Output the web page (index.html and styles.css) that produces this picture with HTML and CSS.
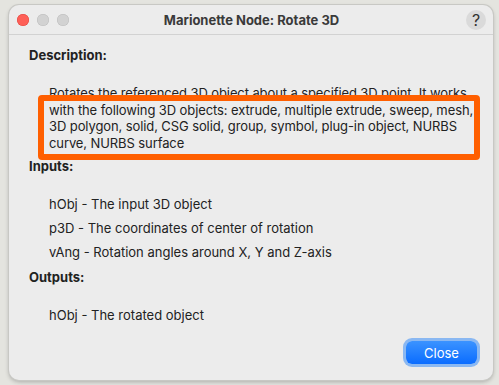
FILE: index.html
```html
<!DOCTYPE html>
<html>
<head>
    <title>Marionette Node: Rotate 3D</title>
    <meta name="viewport" content="width=device-width, initial-scale=1">
    <link rel="stylesheet" href="styles.css">
</head>
<body>
    <div class="window">
        <div class="titlebar">
            <div class="lights">
                <span class="light red"></span>
                <span class="light"></span>
                <span class="light"></span>
            </div>
            <div class="title">Marionette Node: Rotate 3D</div>
            <div class="help">?</div>
        </div>
        <div class="content">
            <h2 class="label">Description:</h2>
            <p class="desc">Rotates the referenced 3D object about a specified 3D point. It works with the following 3D objects: extrude, multiple extrude, sweep, mesh, 3D polygon, solid, CSG solid, group, symbol, plug-in object, NURBS curve, NURBS surface</p>
            <div class="highlight"></div>

            <h2 class="label">Inputs:</h2>
            <ul class="params">
                <li>hObj - The input 3D object</li>
                <li>p3D - The coordinates of center of rotation</li>
                <li>vAng - Rotation angles around X, Y and Z-axis</li>
            </ul>

            <h2 class="label">Outputs:</h2>
            <ul class="params outputs">
                <li>hObj - The rotated object</li>
            </ul>

            <div class="actions">
                <button class="close">Close</button>
            </div>
        </div>
    </div>
</body>
</html>
```

FILE: styles.css
```css
body {
    margin: 0;
    padding: 5px 6px 5px 9px;
    background-color: #e4e4df;
    font-family: Inter, "Liberation Sans", Arial, sans-serif;
    font-size: 13px;
    color: #222;
}
.window {
    width: 484px;
    height: 375px;
    background-color: #ececec;
    border-radius: 10px;
    box-shadow: 0 0 0 1px #c8c8c4, 0 2px 4px rgba(0, 0, 0, 0.25);
    display: flex;
    flex-direction: column;
    overflow: hidden;
}
.titlebar {
    height: 29px;
    flex-shrink: 0;
    display: grid;
    grid-template-columns: 1fr auto 1fr;
    align-items: center;
    padding: 0 7px 0 8px;
    border-bottom: 1px solid #d2d2d2;
}
.lights {
    display: flex;
    gap: 8px;
}
.light {
    width: 12px;
    height: 12px;
    border-radius: 50%;
    background-color: #d2d2d2;
    box-shadow: inset 0 0 0 0.5px #bcbcbc;
}
.light.red {
    background-color: #fe5f57;
    box-shadow: inset 0 0 0 0.5px #e0443e;
}
.title {
    text-align: center;
    font-weight: bold;
    font-size: 13px;
    color: #3a3a3a;
}
.help {
    justify-self: end;
    width: 20px;
    height: 20px;
    border-radius: 50%;
    background-color: #dadada;
    color: #333;
    font-size: 16px;
    line-height: 20px;
    text-align: center;
}
.content {
    flex: 1;
    padding: 12px 6px 16px 20px;
    position: relative;
    display: flex;
    flex-direction: column;
}
.label {
    font-size: 13px;
    font-weight: bold;
    margin: 0;
    line-height: 16px;
    color: #222;
}
.desc {
    margin: 22px 0 7px 20px;
    line-height: 16.6px;
    letter-spacing: -0.1px;
    color: #222;
}
.highlight {
    position: absolute;
    left: 29px;
    top: 60px;
    width: 430px;
    height: 53px;
    border: 6px solid #ff5f00;
    border-radius: 4px;
}
.params {
    list-style: none;
    margin: 22px 0 9px 20px;
    padding: 0;
}
.params li {
    line-height: 16px;
    margin-bottom: 8px;
}
.params li:last-child {
    margin-bottom: 0;
}
.outputs {
    margin-top: 22px;
}
.actions {
    margin-top: auto;
    padding-right: 10px;
    display: flex;
    justify-content: flex-end;
}
.close {
    width: 71px;
    height: 23px;
    border: none;
    border-radius: 6px;
    background: linear-gradient(#3b93ff, #0a6cff);
    color: #fff;
    font-family: Inter, "Liberation Sans", Arial, sans-serif;
    font-size: 13px;
    box-shadow: 0 0 0 3px #8ab8f2;
    padding: 0;
}
```
